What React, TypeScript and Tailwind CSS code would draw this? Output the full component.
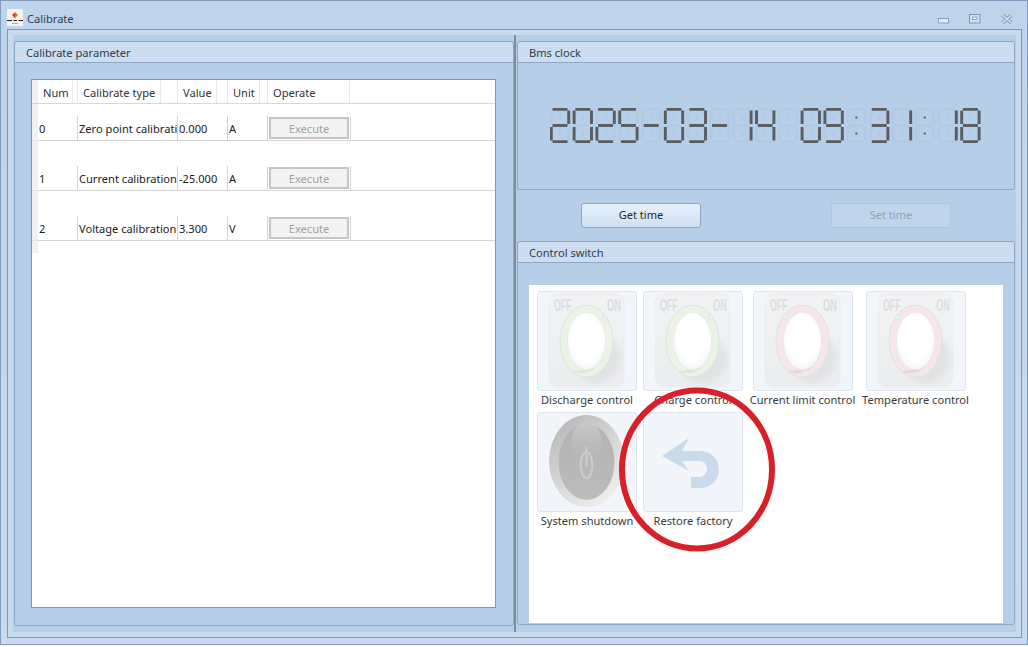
import React from "react";

const SEG: Record<string, string> = {
  "0": "abcdef", "1": "bc", "2": "abged", "3": "abgcd", "4": "fgbc", "5": "afgcd",
  "6": "afgedc", "7": "abc", "8": "abcdefg", "9": "abcdfg", "-": "g", " ": "", ":": "",
};
const SEGMENTS: Record<string, string> = {
  a: "M2.5 1.3H17.5",
  b: "M18.7 2.5V16",
  c: "M18.7 19V32.5",
  d: "M2.5 33.7H17.5",
  e: "M1.3 19V32.5",
  f: "M1.3 2.5V16",
  g: "M2.5 17.5H17.5",
};

function Cell({ ch, x }: { ch: string; x: number }) {
  const on = SEG[ch] ?? "";
  return (
    <g transform={`translate(${x} 0)`}>
      {Object.keys(SEGMENTS).map((k) => (
        <path key={k} d={SEGMENTS[k]} fill="none" strokeWidth={on.includes(k) ? 2.9 : 2.4} stroke={on.includes(k) ? "#595c61" : "#b1c9e3"} />
      ))}
      <rect x={9} y={8.5} width={2} height={2} fill={ch === ":" ? "#595c61" : "#a9c1dc"} />
      <rect x={9} y={24.5} width={2} height={2} fill={ch === ":" ? "#595c61" : "#a9c1dc"} />
    </g>
  );
}

function Clock({ value }: { value: string }) {
  return (
    <>
      <span className="sr-only">{value}</span>
      <svg width={432} height={35} viewBox="0 0 432 35" aria-hidden="true">
        {value.split("").map((c, i) => (
          <Cell key={i} ch={c} x={i * 22.8} />
        ))}
      </svg>
    </>
  );
}

function Knob({ id, ring, ringDark, dotLeft }: { id: string; ring: string; ringDark: string; dotLeft?: boolean }) {
  return (
    <svg width={98} height={98} viewBox="0 0 98 98" aria-hidden="true">
      <defs>
        <linearGradient id={`${id}p`} x1="0" y1="0" x2="0" y2="1">
          <stop offset="0" stopColor="#f2f3f4" />
          <stop offset="1" stopColor="#ebecee" />
        </linearGradient>
        <radialGradient id={`${id}w`} cx="0.5" cy="0.45" r="0.6">
          <stop offset="0.65" stopColor="#ffffff" />
          <stop offset="1" stopColor="#f4f4f4" />
        </radialGradient>
        <filter id={`${id}b`} x="-30%" y="-30%" width="160%" height="160%">
          <feGaussianBlur stdDeviation="2.5" />
        </filter>
      </defs>
      <rect x={11} y={2} width={75} height={93} rx={9} fill={`url(#${id}p)`} stroke="#ebecee" />
      <g fontFamily="'Liberation Sans', sans-serif" fontWeight={700} fontSize={16} fill="#dcdddf">
        <text transform="translate(16 19) scale(0.55 1)">OFF</text>
        <text transform="translate(69 19) scale(0.58 1)">ON</text>
      </g>
      <ellipse cx={59} cy={66} rx={24} ry={25} fill="#e2e3e5" filter={`url(#${id}b)`} />
      <ellipse cx={48.5} cy={49} rx={26.5} ry={36} fill={ring} stroke="#dcdfdc" strokeWidth={0.8} />
      <path d="M67 60 A26.5 36 0 0 1 33 79 Q56 79 67 60Z" fill={ringDark} />
      <ellipse cx={48.5} cy={49} rx={19.5} ry={29} fill="#e9ebea" />
      <ellipse cx={48.5} cy={49} rx={18.7} ry={28.2} fill={`url(#${id}w)`} />
      <circle cx={dotLeft ? 31 : 66.5} cy={dotLeft ? 25 : 26} r={2.4} fill="#eff0f0" stroke="#dcdede" strokeWidth={0.6} />
    </svg>
  );
}

function Power() {
  return (
    <svg width={98} height={98} viewBox="0 0 98 98" aria-hidden="true">
      <defs>
        <linearGradient id="pwo" x1="0.1" y1="0" x2="0.8" y2="1">
          <stop offset="0" stopColor="#b5b5b5" />
          <stop offset="0.45" stopColor="#d2d2d2" />
          <stop offset="1" stopColor="#f1f1f1" />
        </linearGradient>
        <linearGradient id="pwi" x1="0" y1="0" x2="0" y2="1">
          <stop offset="0" stopColor="#b2b2b2" />
          <stop offset="1" stopColor="#bcbcbc" />
        </linearGradient>
        <linearGradient id="pwg" x1="0" y1="0" x2="0" y2="1">
          <stop offset="0" stopColor="#c9c9c9" />
          <stop offset="1" stopColor="#c0c0c0" stopOpacity={0} />
        </linearGradient>
      </defs>
      <ellipse cx={48.5} cy={48} rx={37.5} ry={46} fill="url(#pwo)" />
      <ellipse cx={48.5} cy={49} rx={28} ry={38} fill="url(#pwi)" />
      <ellipse cx={48.5} cy={28} rx={15} ry={19} fill="url(#pwg)" />
      <ellipse cx={48.5} cy={52} rx={5.8} ry={13} fill="none" stroke="#cbcbcb" strokeWidth={2.4} />
      <path d="M48.5 34V54" stroke="#cbcbcb" strokeWidth={2.4} />
    </svg>
  );
}

function Restore() {
  return (
    <svg width={98} height={98} viewBox="0 0 98 98" aria-hidden="true">
      <path d="M18 43 L45 25 L38 38 H56 C68 38 75 47 75 56 C75 68 66 75 56 75 H47 V64 H55 C60 64 63 60 63 56 C63 51 60 48 55 48 H38 L45 58 Z" fill="#c9daec" />
    </svg>
  );
}

function Tile({ children, label, width = "w-[100px]" }: { children: React.ReactNode; label: string; width?: string }) {
  return (
    <div className={`flex flex-col items-center ${width}`}>
      <div className="w-[100px] h-[100px] shrink-0 flex items-center justify-center rounded-[3px] border border-[#dde6f0] bg-[#f2f6fb]">
        {children}
      </div>
      <span className="h-[20px] leading-[18px] whitespace-nowrap text-[#3a3a3a]">{label}</span>
    </div>
  );
}

function Panel({ title, className, children }: { title: string; className?: string; children: React.ReactNode }) {
  return (
    <section className={`flex flex-col rounded-[3px] border border-[#8fa8c7] bg-[#b7cee8] ${className ?? ""}`}>
      <header className="h-[21px] shrink-0 leading-[22px] pl-[11px] border-b border-[#8fa8c7] bg-[#cddcef] rounded-t-[3px] text-[#2d3d50]">{title}</header>
      {children}
    </section>
  );
}

const rows = [
  ["0", "Zero point calibration", "0.000", "A"],
  ["1", "Current calibration", "-25.000", "A"],
  ["2", "Voltage calibration", "3.300", "V"],
];

function HeadCell({ w, children }: { w: string; children?: React.ReactNode }) {
  return (
    <div className={`${w} shrink-0 h-full pl-[5px] border-r border-[#e6e9ed] leading-[25px] text-[#333] whitespace-nowrap`}>{children}</div>
  );
}

function DataCell({ w, children }: { w: string; children: React.ReactNode }) {
  return (
    <div className={`${w} shrink-0 h-full pl-[1px] border-r border-[#d4d4d4] overflow-hidden whitespace-nowrap leading-[26px] text-[#222]`}>{children}</div>
  );
}

export default function App() {
  return (
    <div className="relative w-[1028px] h-[647px] overflow-hidden bg-white text-[11.1px] font-['Noto_Sans','Open_Sans',sans-serif]">
      <div className="flex flex-col h-[645px] border border-[#7f9bbd] bg-gradient-to-b from-[#c0d3ec] to-[#c9daef]">
        {/* title bar */}
        <div className="h-[28px] shrink-0 flex items-center pl-[6px] pr-[14px]">
          <svg width={16} height={17} viewBox="0 0 16 17" aria-hidden="true" className="mt-[5px]">
            <rect width={16} height={17} fill="#f4f2ee" />
            <path d="M8 3 L11 6 L8 9 L5 6Z" fill="#e2762a" />
            <path d="M8 4 L8 9 L5.5 6Z" fill="#d8262b" />
            <path d="M0 11.5H5M6.5 11.5H10M11.5 11.5H16" stroke="#222" strokeWidth={1} />
            <path d="M5 14.5H11" stroke="#aaa" strokeWidth={1} />
          </svg>
          <span className="ml-[4px] mt-[9px] text-[#2f3f55]">Calibrate</span>
          <div className="ml-auto flex items-center gap-[20px] mt-[8px]">
            <svg width={11} height={6} viewBox="0 0 11 6" aria-hidden="true" className="mt-[4px]">
              <rect x={0.5} y={0.5} width={10} height={4.5} fill="#e3ecf7" stroke="#8ba0bb" />
            </svg>
            <svg width={12} height={10} viewBox="0 0 12 10" aria-hidden="true">
              <rect x={0.5} y={0.5} width={10.5} height={8.5} fill="#d3e0f1" stroke="#7d95b3" />
              <rect x={3.5} y={3} width={4.5} height={2.5} fill="#eef3fa" stroke="#7d95b3" strokeWidth={0.8} />
            </svg>
            <svg width={12} height={10} viewBox="0 0 12 10" aria-hidden="true">
              <path d="M1.5 1 L10.5 9 M10.5 1 L1.5 9" stroke="#8aa0ba" strokeWidth={3.6} />
              <path d="M1.5 1 L10.5 9 M10.5 1 L1.5 9" stroke="#d6e0ec" strokeWidth={1.4} />
            </svg>
          </div>
        </div>

        {/* client frame */}
        <div className="flex-1 min-h-0 ml-[6px] mr-[5px] mb-[6px] border border-[#7f97b5] bg-[#c9d9ee] p-[5px]">
          <div className="flex h-full bg-[#b7cee8] pl-[1px]">
            {/* left */}
            <Panel title="Calibrate parameter" className="w-[500px] shrink-0 mt-[6px] mb-[6px]">
              <div className="flex-1 min-h-0 pt-[16px] pl-[16px] pr-[17px] pb-[17px]">
                <div className="h-full border border-[#7f97b5] bg-white flex flex-col">
                  <div className="h-[24px] shrink-0 flex border-b border-[#d5d9de] bg-white">
                    <div className="w-[6px] h-full bg-[#f1f1f1]" />
                    <HeadCell w="w-[35px]">Num</HeadCell>
                    <div className="w-[5px] h-full border-r border-[#e6e9ed]" />
                    <HeadCell w="w-[83px]">Calibrate type</HeadCell>
                    <div className="w-[17px] h-full border-r border-[#e6e9ed]" />
                    <HeadCell w="w-[39px]">Value</HeadCell>
                    <div className="w-[11px] h-full border-r border-[#e6e9ed]" />
                    <HeadCell w="w-[32px]">Unit</HeadCell>
                    <div className="w-[8px] h-full border-r border-[#e6e9ed]" />
                    <HeadCell w="w-[82px]">Operate</HeadCell>
                  </div>
                  {rows.map((r, i) => (
                    <div key={r[0]} className={`flex items-end shrink-0 ${i === 0 ? "h-[37px]" : "h-[50px]"}`}>
                      <div className="w-[6px] h-full shrink-0 bg-[#f1f1f1] border-b border-[#e2e2e2]" />
                      <div className="flex-1 h-[25px] flex border-b border-[#d4d4d4]">
                        <DataCell w="w-[40px]">{r[0]}</DataCell>
                        <DataCell w="w-[100px]">{r[1]}</DataCell>
                        <DataCell w="w-[50px]">{r[2]}</DataCell>
                        <DataCell w="w-[40px]">{r[3]}</DataCell>
                        <div className="w-[83px] shrink-0 h-full pl-[1px] pb-[1px] pt-[1px] border-r border-[#d4d4d4]">
                          <button type="button" disabled className="w-[80px] h-[22px] border-2 border-[#c6c6c6] bg-[#f2f2f2] text-[#a2a2a2] leading-[20px]">Execute</button>
                        </div>
                      </div>
                    </div>
                  ))}
                  <div className="w-[6px] h-[12px] shrink-0 bg-[#f1f1f1]" />
                </div>
              </div>
            </Panel>

            {/* splitter */}
            <div className="w-[2px] shrink-0 mr-[1px] bg-[#808b99]" />

            {/* right */}
            <div className="w-[498px] shrink-0 flex flex-col mt-[6px] mb-[7px]">
              <Panel title="Bms clock" className="h-[149px] shrink-0">
                <div className="flex-1 flex items-center justify-center pb-[1px]">
                  <Clock value="2025-03-14 09:31:18" />
                </div>
              </Panel>
              <div className="h-[51px] shrink-0 flex items-center pl-[64px] gap-[130px] pb-[1px]">
                <button type="button" className="w-[120px] h-[25px] pt-[1px] rounded-[3px] border border-[#8aa6c8] bg-gradient-to-b from-[#e6f0fa] to-[#cfdff1] text-[#2a2a2a]">Get time</button>
                <button type="button" disabled className="w-[120px] h-[25px] pt-[1px] rounded-[3px] border border-[#adc5e0] bg-[#c0d5ec] text-[#8da2bb]">Set time</button>
              </div>
              <Panel title="Control switch" className="flex-1 min-h-0">
                <div className="flex-1 min-h-0 pt-[22px] pb-[1px] px-[11px]">
                  <div className="h-full bg-white pt-[6px] pl-[5px] flex flex-col gap-[1px]">
                    <div className="flex gap-[6px] pl-[3px]">
                      <Tile label="Discharge control"><Knob id="k1" ring="#ebf3e5" ringDark="#dfe6da" /></Tile>
                      <Tile label="Charge control"><Knob id="k2" ring="#ebf3e5" ringDark="#dfe6da" /></Tile>
                      <Tile label="Current limit control" width="w-[107px]"><Knob id="k3" ring="#f6e5ec" ringDark="#e6d8de" dotLeft /></Tile>
                      <Tile label="Temperature control" width="w-[107px]"><Knob id="k4" ring="#f6e5ec" ringDark="#e6d8de" dotLeft /></Tile>
                    </div>
                    <div className="flex gap-[6px] pl-[3px]">
                      <Tile label="System shutdown"><Power /></Tile>
                      <Tile label="Restore factory"><Restore /></Tile>
                    </div>
                  </div>
                </div>
              </Panel>
            </div>
          </div>
        </div>
      </div>

      {/* red annotation drawn over the screenshot */}
      <svg className="absolute left-[616px] top-[384px] pointer-events-none" width={164} height={172} viewBox="0 0 164 172" aria-hidden="true">
        <ellipse cx={81} cy={85.5} rx={75} ry={79} fill="none" stroke="#d91f28" strokeWidth={6} />
      </svg>
    </div>
  );
}
